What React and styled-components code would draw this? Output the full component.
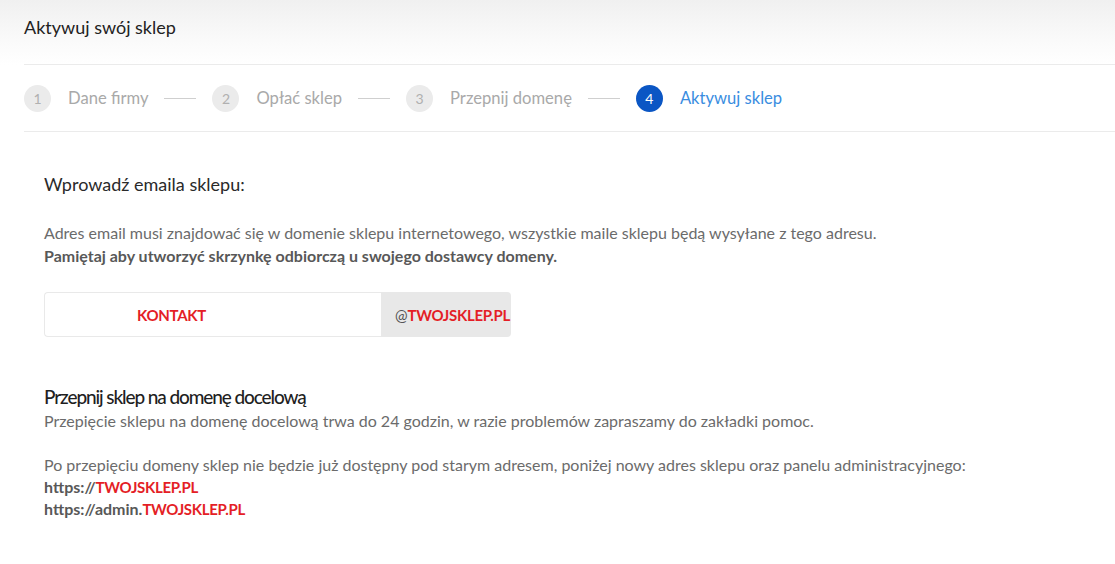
import React from "react";
import styled, { createGlobalStyle } from "styled-components";

const Global = createGlobalStyle`
  html, body { margin: 0; padding: 0; background: #fff; }
  body { font-family: Lato, "Noto Sans", sans-serif; -webkit-font-smoothing: antialiased; }
  * { box-sizing: border-box; }
`;

const Page = styled.div`
  width: 1115px;
  min-height: 564px;
  background: #fff;
`;

const Header = styled.header`
  background: linear-gradient(180deg, #f0f0f0 0%, #f9f9f9 55%, #ffffff 100%);
  padding-left: 24px;
`;

const HeaderInner = styled.div`
  height: 65px;
  border-bottom: 1px solid #ebebeb;
  display: flex;
  align-items: flex-start;
  padding-top: 15px;
`;

const Title = styled.h1`
  margin: 0;
  font-size: 18px;
  font-weight: 400;
  color: #222;
  line-height: 24px;
`;

const StepsWrap = styled.div`
  padding-left: 24px;
`;

const Steps = styled.nav`
  height: 67px;
  border-bottom: 1px solid #ebebeb;
  display: flex;
  align-items: center;
`;

const Step = styled.div`
  display: flex;
  align-items: center;
  gap: 17px;
`;

const Circle = styled.span`
  width: 27px;
  height: 27px;
  border-radius: 50%;
  display: flex;
  align-items: center;
  justify-content: center;
  font-size: 14px;
  background: ${(p) => (p.$active ? "#0b56c4" : "#ebebeb")};
  color: ${(p) => (p.$active ? "#fff" : "#b0b0b0")};
`;

const StepLabel = styled.span`
  font-size: 16.6px;
  color: ${(p) => (p.$active ? "#3a8ddf" : "#a9a9a9")};
`;

const Connector = styled.span`
  width: 32px;
  height: 1px;
  background: #cfcfcf;
  margin: 0 16px;
`;

const Content = styled.main`
  padding: 40px 44px 0;
`;

const SectionTitle = styled.h2`
  margin: 0;
  font-size: 18px;
  font-weight: 400;
  color: #2a2a2a;
  line-height: 24px;
`;

const Text = styled.p`
  margin: 0;
  font-size: 16px;
  line-height: 23px;
  color: #6b6b6b;
`;

const Strong = styled.span`
  display: block;
  font-weight: 700;
  color: #585858;
`;

const Intro = styled.div`
  margin-top: 25px;
`;

const InputGroup = styled.div`
  margin-top: 25px;
  display: flex;
  width: 467px;
  height: 45px;
`;

const Field = styled.div`
  flex: 0 0 337px;
  border: 1px solid #e9e9e9;
  border-right: none;
  border-radius: 4px 0 0 4px;
  background: #fff;
  display: flex;
  align-items: center;
  padding-left: 92px;
`;

const Addon = styled.div`
  flex: 1;
  background: #e8e8e8;
  border-radius: 0 4px 4px 0;
  display: flex;
  align-items: center;
  padding-left: 14px;
  white-space: nowrap;
  color: #555;
  font-size: 15px;
`;

const Red = styled.span`
  color: #e41e26;
  font-weight: 700;
  font-size: 15px;
  letter-spacing: -0.3px;
`;

const Domain = styled.section`
  margin-top: 48px;
`;

const DomainTitle = styled.h2`
  margin: 0;
  font-size: 19px;
  font-weight: 500;
  color: #1f1f1f;
  line-height: 24px;
  letter-spacing: -1.1px;
`;

const Spacer = styled.div`
  height: 21px;
`;

const Link = styled.div`
  font-size: 16px;
  line-height: 22px;
  font-weight: 700;
  color: #585858;
`;

const steps = [
  { n: 1, label: "Dane firmy" },
  { n: 2, label: "Opłać sklep" },
  { n: 3, label: "Przepnij domenę" },
  { n: 4, label: "Aktywuj sklep", active: true },
];

export default function App() {
  return (
    <Page>
      <Global />
      <Header>
        <HeaderInner>
          <Title>Aktywuj swój sklep</Title>
        </HeaderInner>
      </Header>
      <StepsWrap>
        <Steps>
          {steps.map((s, i) => (
            <React.Fragment key={s.n}>
              {i > 0 && <Connector />}
              <Step>
                <Circle $active={s.active}>{s.n}</Circle>
                <StepLabel $active={s.active}>{s.label}</StepLabel>
              </Step>
            </React.Fragment>
          ))}
        </Steps>
      </StepsWrap>
      <Content>
        <SectionTitle>Wprowadź emaila sklepu:</SectionTitle>
        <Intro>
          <Text>
            Adres email musi znajdować się w domenie sklepu internetowego, wszystkie maile sklepu będą wysyłane z tego adresu.
            <Strong>Pamiętaj aby utworzyć skrzynkę odbiorczą u swojego dostawcy domeny.</Strong>
          </Text>
        </Intro>
        <InputGroup>
          <Field>
            <Red>KONTAKT</Red>
          </Field>
          <Addon>
            @<Red>TWOJSKLEP.PL</Red>
          </Addon>
        </InputGroup>
        <Domain>
          <DomainTitle>Przepnij sklep na domenę docelową</DomainTitle>
          <Text>Przepięcie sklepu na domenę docelową trwa do 24 godzin, w razie problemów zapraszamy do zakładki pomoc.</Text>
          <Spacer />
          <Text>Po przepięciu domeny sklep nie będzie już dostępny pod starym adresem, poniżej nowy adres sklepu oraz panelu administracyjnego:</Text>
          <Link>
            https://<Red>TWOJSKLEP.PL</Red>
          </Link>
          <Link>
            https://admin.<Red>TWOJSKLEP.PL</Red>
          </Link>
        </Domain>
      </Content>
    </Page>
  );
}
